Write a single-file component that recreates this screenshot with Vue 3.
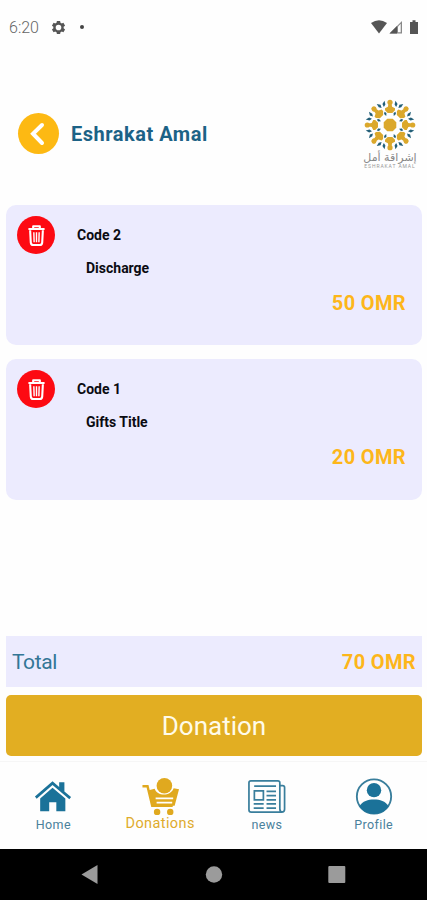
<template>
  <div class="screen">
    <div class="status-bar">
      <span class="clock">6:20</span>
      <svg class="gear" viewBox="0 0 24 24">
        <path fill-rule="evenodd" d="M20.200 13.200a8 8 0 0 0 0-2.400l2.300-1.800-2.600-4.500-2.800 1.100a8 8 0 0 0-2-1.100L14.600 1.500H9.400L8.900 4.500a8 8 0 0 0-2 1.100L4.100 4.500 1.500 9l2.300 1.800a8 8 0 0 0 0 2.400L1.500 15l2.600 4.500 2.800-1.100a8 8 0 0 0 2 1.100l.5 3h5.200l.5-3a8 8 0 0 0 2-1.100l2.800 1.100 2.600-4.500zM12 16.500a4.500 4.500 0 1 1 0-9 4.500 4.500 0 0 1 0 9z" />
      </svg>
      <span class="dot"></span>
      <svg class="signals" viewBox="0 0 48 15">
        <path d="M0 3Q8-2.500 16 3L8 13.500z" />
        <path d="M18.500 13.500L31 1v12.500z" fill="#888" />
        <path d="M18.500 13.500L26 6v7.500z" />
        <path d="M27 6.500l2.700-2.700v8.500H27z" fill="#fff" />
        <path d="M39 2h2.500V.3h3V2H47v12h-8z" />
      </svg>
    </div>

    <header class="header">
      <button class="back" aria-label="Back">
        <svg viewBox="0 0 41 41">
          <path d="M24 12l-9 8.700 9 9.300" />
        </svg>
      </button>
      <h1>Eshrakat Amal</h1>
      <div class="logo">
        <svg viewBox="-26 -26 52 52">
          <path class="gold" d="M-2.700-6.300h5.400l3.600 3.600v5.400L2.700 6.300h-5.400l-3.600-3.600v-5.400z" />
          <g v-for="angle in angles" :key="angle" :transform="`rotate(${angle})`">
            <circle class="gold" cx="0" cy="-22.700" r="2.600" />
            <path class="gold" d="M-1.500-21.500h3l.6 3.200 2.900 1.500v2L2.300-12h-4.600L-5-14.800v-2l2.900-1.500z" />
            <g transform="rotate(22.500)">
              <path class="navy" d="M-4.200-24.500l3.200 2.300-.2 3.200-2.400-1.700zM4.200-24.500L1-22.200l.2 3.200 2.400-1.700z" />
              <path class="navy" d="M0-14.300l1.300 1.900L0-9.800l-1.300-2.600z" />
            </g>
          </g>
        </svg>
        <span class="logo-ar">إشراقة أمل</span>
        <span class="logo-en">ESHRAKAT AMAL</span>
      </div>
    </header>

    <main class="cart">
      <article v-for="item in items" :key="item.code" class="card">
        <button class="delete" aria-label="Delete">
          <svg viewBox="0 0 20 24">
            <path d="M1.500 5.200h17M6.500 4.500V2.200h7v2.300M3.300 6.500l.7 13q.2 2.500 2.500 2.500h7q2.300 0 2.500-2.500l.7-13" />
            <path class="thin" d="M7.200 8.500l.3 10.500M10 8.500V19M12.800 8.500L12.500 19" />
          </svg>
        </button>
        <div class="details">
          <h2>Code {{ item.code }}</h2>
          <p>{{ item.title }}</p>
        </div>
        <strong class="amount">{{ item.price }} OMR</strong>
      </article>
    </main>

    <section class="total">
      <span>Total</span>
      <strong class="amount">{{ total }} OMR</strong>
    </section>
    <button class="donate">Donation</button>

    <nav class="tabs">
      <a class="tab">
        <svg viewBox="0 0 40 36">
          <path d="M1 18L19.500 2l7 6V3h5.500v9.700l7 5.800-1.800 2.300L19.500 5.800 2.800 20.300z" />
          <path d="M6.500 20L19.500 8.800 33 20v13.500H23.500V24h-7.500v9.500H6.500z" />
        </svg>
        <span>Home</span>
      </a>
      <a class="tab active">
        <svg viewBox="0 0 40 40">
          <path class="line" d="M1.500 9.500h5.200l4.800 20h21" />
          <path d="M8 13.500l6-1.500c2.500 8 16.500 8 19.500-.5l5.500 1-4.500 17H12z" />
          <circle cx="24" cy="9" r="8" />
          <path class="cut" d="M15 22h18M16 26.200h16" />
          <circle cx="16.500" cy="35.800" r="3.300" />
          <circle cx="30" cy="35.800" r="3.300" />
        </svg>
        <span>Donations</span>
      </a>
      <a class="tab">
        <svg viewBox="0 0 40 36">
          <g class="outline">
            <path d="M33.500 31V3.500q0-2-2-2H3q-2 0-2 2V32q0 2.500 2.500 2.500h32q3 0 3-3V8.500q0-2-2-2h-3M33.500 31q0 3.500 2.500 3.500" />
            <path d="M6.500 7h23M19.500 12.500h10M19.500 17h10M19.500 21.500h10M6 25.800h10.500M6 30.200h10.500M19.500 25.800h10M19.500 30.200h10" />
            <path d="M6.700 12h9.500v9.500H6.700z" />
          </g>
        </svg>
        <span>news</span>
      </a>
      <a class="tab">
        <svg viewBox="0 0 36 36">
          <circle class="ring" cx="18" cy="18" r="16.700" />
          <circle cx="18" cy="11.800" r="7" />
          <path d="M3.800 27.500C7 22.500 12 21 18 21s11 1.500 14.200 6.500C26.500 37.500 9.500 37.500 3.800 27.500z" />
        </svg>
        <span>Profile</span>
      </a>
    </nav>

    <footer class="system-nav">
      <svg viewBox="0 0 427 51">
        <path d="M81.500 25.500l16-9.500v19z" />
        <circle cx="214" cy="25.500" r="8.200" />
        <rect x="328.300" y="17" width="17" height="17" rx="1" />
      </svg>
    </footer>
  </div>
</template>

<script setup>
import { computed, ref } from 'vue'

const items = ref([
  { code: 2, title: 'Discharge', price: 50 },
  { code: 1, title: 'Gifts Title', price: 20 }
])

const total = computed(() => items.value.reduce((sum, item) => sum + item.price, 0))

// the logo repeats one figure around its centre
const angles = [0, 45, 90, 135, 180, 225, 270, 315]
</script>

<style>
body {
  margin: 0;
  background: #fefefe;
}
</style>

<style scoped>
.screen {
  display: flex;
  flex-direction: column;
  height: 900px;
  overflow: hidden;
  background: #fefefe;
  font-family: Roboto, sans-serif;
}

button {
  border: none;
  padding: 0;
  font-family: inherit;
}

svg {
  display: block;
}

.status-bar {
  display: flex;
  align-items: center;
  height: 54px;
  padding: 0 8px 0 9px;
  box-sizing: border-box;
}

.clock {
  width: 42px;
  font-size: 16px;
  font-weight: 300;
  color: #666;
}

.gear {
  width: 15px;
  height: 15px;
  fill: #555;
}

.dot {
  width: 4px;
  height: 4px;
  margin-left: 14px;
  border-radius: 50%;
  background: #444;
}

.signals {
  width: 48px;
  height: 15px;
  margin-left: auto;
  fill: #555;
}

.header {
  display: flex;
  align-items: center;
  height: 151px;
  padding: 0 10px 0 18px;
  box-sizing: border-box;
}

.back {
  width: 41px;
  height: 41px;
  margin-top: 7px;
  border-radius: 50%;
  background: #fdb913;
}

.back path {
  fill: none;
  stroke: #fff;
  stroke-width: 4;
  stroke-linecap: round;
}

h1 {
  margin: 8px 0 0 12px;
  font-size: 20px;
  font-weight: 700;
  letter-spacing: 0.52px;
  color: #1c6286;
}

.logo {
  display: flex;
  flex-direction: column;
  align-items: center;
  width: 54px;
  margin-top: 8px;
  margin-left: auto;
}

.logo svg {
  width: 52px;
  height: 52px;
}

.gold {
  fill: #dba82b;
}

.navy {
  fill: #235f78;
}

.logo-ar {
  font-family: "DejaVu Sans", sans-serif;
  font-size: 11px;
  line-height: 13px;
  white-space: nowrap;
  color: #888;
}

.logo-en {
  font-size: 5px;
  line-height: 5px;
  letter-spacing: 0.9px;
  white-space: nowrap;
  color: #999;
}

.cart {
  display: flex;
  flex-direction: column;
  gap: 14px;
  height: 431px;
  padding: 0 5px 0 6px;
}

.card {
  display: flex;
  height: 140.4px;
  padding: 11px 16px 0 11px;
  box-sizing: border-box;
  border-radius: 10px;
  background: #ecebfe;
}

.delete {
  display: flex;
  align-items: center;
  justify-content: center;
  width: 38px;
  height: 38px;
  border-radius: 50%;
  background: #fd0a12;
}

.delete svg {
  width: 19px;
  height: 23px;
  fill: none;
  stroke: #fff;
  stroke-width: 2.2;
  stroke-linejoin: round;
}

.delete .thin {
  stroke-width: 1.5;
}

.details {
  padding: 9px 0 0 22px;
  color: #0b0b12;
}

.details h2,
.details p {
  margin: 0;
  font-size: 14px;
  font-weight: 700;
  line-height: 20px;
}

.details p {
  margin: 13px 0 0 9px;
}

.amount {
  font-size: 20px;
  font-weight: 700;
  letter-spacing: 0.35px;
  color: #fdb61a;
}

.card .amount {
  margin: 75px 0 0 auto;
}

.total {
  display: flex;
  align-items: center;
  justify-content: space-between;
  height: 51px;
  margin: 0 5px 8px 6px;
  padding: 0 6px;
  box-sizing: border-box;
  background: #ecebfe;
  font-size: 21px;
  letter-spacing: -0.4px;
  color: #337696;
}

.donate {
  height: 61px;
  margin: 0 5px 5px 6px;
  border-radius: 5px;
  background: #e2ae22;
  font-size: 26px;
  color: #fffbe9;
}

.tabs {
  display: grid;
  grid-template-columns: repeat(4, 1fr);
  height: 88px;
  box-sizing: border-box;
  border-top: 1px solid #f6f6f6;
}

.tab {
  display: flex;
  flex-direction: column;
  align-items: center;
  padding-top: 16px;
  font-size: 12.5px;
  line-height: 16px;
  letter-spacing: 0.4px;
  color: #4a819c;
}

.tab svg {
  width: 38px;
  height: 37px;
  margin-bottom: 2px;
  fill: #1b7299;
}

.tab .outline,
.tab .ring {
  fill: none;
  stroke: #397e9c;
  stroke-width: 1.8;
}

.tab.active {
  padding-top: 15px;
  font-size: 14.5px;
  color: #dfab2c;
}

.active svg {
  width: 39px;
  height: 39px;
  margin-bottom: 0;
  fill: #e0a91f;
}

.active .line {
  fill: none;
  stroke: #e0a91f;
  stroke-width: 2.5;
}

.active .cut {
  stroke: #fff;
  stroke-width: 1.8;
}

.system-nav {
  height: 51px;
  background: #000;
}

.system-nav svg {
  width: 427px;
  height: 51px;
  fill: #9b9b9b;
}
</style>
